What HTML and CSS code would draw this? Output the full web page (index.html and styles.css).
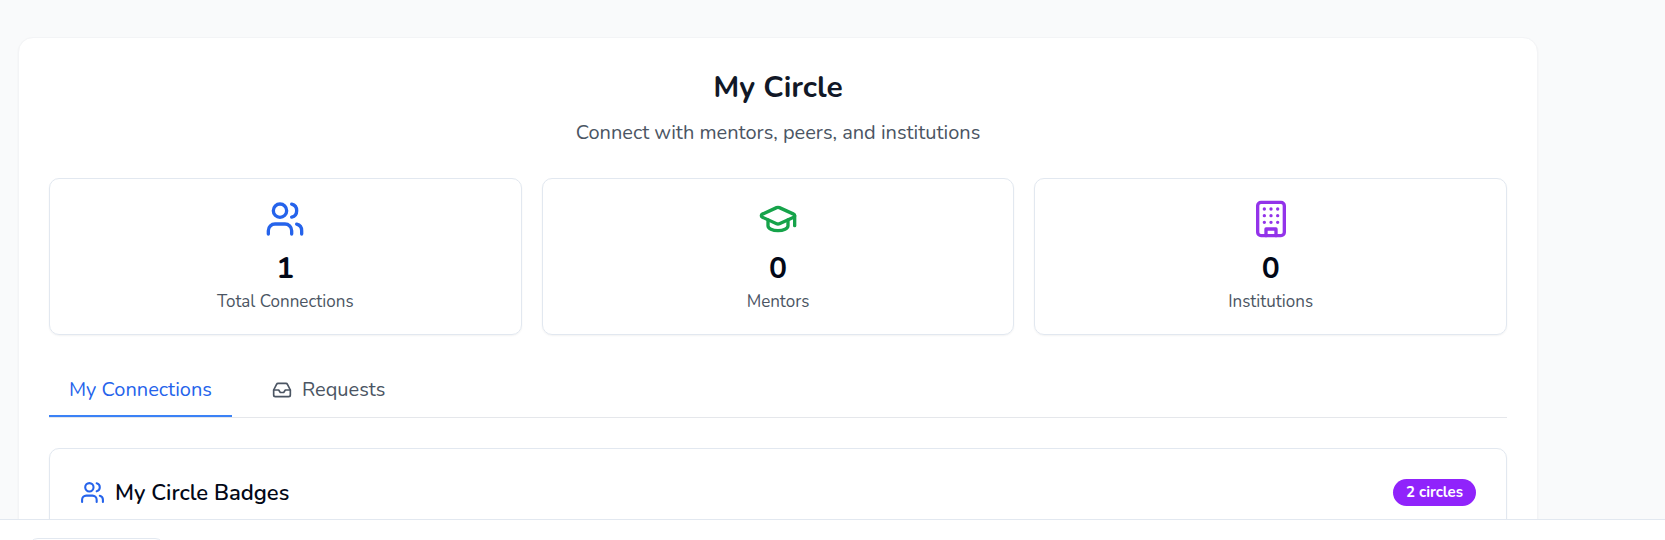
FILE: index.html
```html
<!DOCTYPE html>
<html lang="en">
<head>
<meta charset="utf-8">
<meta name="viewport" content="width=device-width, initial-scale=1">
<title>My Circle</title>
<link rel="stylesheet" href="styles.css">
</head>
<body>
<div class="page">
  <main class="content">
    <section class="panel">
      <header class="intro">
        <h1 class="intro-title">My Circle</h1>
        <p class="intro-text">Connect with mentors, peers, and institutions</p>
      </header>

      <div class="stats">
        <article class="stat">
          <svg class="icon icon-large blue" viewBox="0 0 24 24" aria-hidden="true"><path d="M16 21v-2a4 4 0 0 0-4-4H6a4 4 0 0 0-4 4v2"/><circle cx="9" cy="7" r="4"/><path d="M22 21v-2a4 4 0 0 0-3-3.87"/><path d="M16 3.13a4 4 0 0 1 0 7.75"/></svg>
          <div class="stat-value">1</div>
          <div class="stat-label">Total Connections</div>
        </article>
        <article class="stat">
          <svg class="icon icon-large green" viewBox="0 0 24 24" aria-hidden="true"><path d="M21.42 10.922a1 1 0 0 0-.019-1.838L12.83 5.18a2 2 0 0 0-1.66 0L2.6 9.08a1 1 0 0 0 0 1.832l8.57 3.908a2 2 0 0 0 1.66 0z"/><path d="M22 10v6"/><path d="M6 12.5V16a6 3 0 0 0 12 0v-3.5"/></svg>
          <div class="stat-value">0</div>
          <div class="stat-label">Mentors</div>
        </article>
        <article class="stat">
          <svg class="icon icon-large purple" viewBox="0 0 24 24" aria-hidden="true"><rect width="16" height="20" x="4" y="2" rx="2"/><path d="M9 22v-4h6v4"/><path d="M8 6h.01M16 6h.01M12 6h.01M12 10h.01M12 14h.01M16 10h.01M16 14h.01M8 10h.01M8 14h.01"/></svg>
          <div class="stat-value">0</div>
          <div class="stat-label">Institutions</div>
        </article>
      </div>

      <nav class="tabs">
        <button class="tab tab-active" type="button">My Connections</button>
        <button class="tab" type="button">
          <svg class="icon icon-small" viewBox="0 0 24 24" aria-hidden="true"><path d="M22 12h-6l-2 3h-4l-2-3H2"/><path d="M5.45 5.11 2 12v6a2 2 0 0 0 2 2h16a2 2 0 0 0 2-2v-6l-3.45-6.89A2 2 0 0 0 16.76 4H7.24a2 2 0 0 0-1.79 1.11z"/></svg>
          Requests
        </button>
      </nav>

      <section class="badges">
        <h2 class="badges-title">
          <svg class="icon icon-medium blue" viewBox="0 0 24 24" aria-hidden="true"><path d="M16 21v-2a4 4 0 0 0-4-4H6a4 4 0 0 0-4 4v2"/><circle cx="9" cy="7" r="4"/><path d="M22 21v-2a4 4 0 0 0-3-3.87"/><path d="M16 3.13a4 4 0 0 1 0 7.75"/></svg>
          My Circle Badges
        </h2>
        <span class="pill">2 circles</span>
      </section>
    </section>
  </main>
  <footer class="dock">
    <div class="dock-box"></div>
  </footer>
</div>
</body>
</html>
```

FILE: styles.css
```css
* { box-sizing: border-box; }

body {
  margin: 0;
  font-family: Nunito, Lato, sans-serif;
  font-size: 20px;
  line-height: 30px;
  color: #020817;
  background: #f9fafb;
}

.page {
  display: flex;
  flex-direction: column;
  height: 100vh;
}

.content {
  flex: 1;
  min-height: 0;
  overflow: hidden;
  padding: 37px 18px 0;
}

.panel {
  max-width: 1520px;
  padding: 30px;
  background: #fff;
  border: 1px solid #f3f4f6;
  border-radius: 15px;
  box-shadow: 0 1px 2px rgba(0, 0, 0, 0.05);
}

.intro {
  margin-bottom: 30px;
  text-align: center;
}

.intro-title {
  margin: 0 0 10px;
  font-size: 30px;
  line-height: 40px;
  font-weight: 700;
  color: #111827;
}

.intro-text {
  margin: 0;
  color: #4b5563;
}

.stats {
  display: grid;
  grid-template-columns: repeat(3, 1fr);
  gap: 20px;
  margin-bottom: 30px;
}

.stat {
  display: flex;
  flex-direction: column;
  align-items: center;
  padding: 20px;
  border: 1px solid #e2e8f0;
  border-radius: 10px;
  box-shadow: 0 1px 2px rgba(0, 0, 0, 0.05);
}

.stat-value {
  margin-top: 10px;
  font-size: 30px;
  line-height: 40px;
  font-weight: 700;
}

.stat-label {
  font-size: 17px;
  line-height: 25px;
  color: #4b5563;
}

.icon {
  flex: none;
  fill: none;
  stroke: currentColor;
  stroke-width: 2;
  stroke-linecap: round;
  stroke-linejoin: round;
}

.icon-large { width: 40px; height: 40px; }
.icon-medium { width: 25px; height: 25px; }
.icon-small { width: 20px; height: 20px; }

.blue { color: #2563eb; }
.green { color: #16a34a; }
.purple { color: #9333ea; }

.tabs {
  display: flex;
  gap: 20px;
  margin-bottom: 30px;
  border-bottom: 1px solid #e5e7eb;
}

.tab {
  display: flex;
  align-items: center;
  gap: 10px;
  padding: 10px 20px;
  border: 0;
  border-bottom: 2px solid transparent;
  background: none;
  font: inherit;
  color: #4b5563;
  cursor: pointer;
}

.tab-active {
  color: #2563eb;
  border-bottom-color: #3b82f6;
}

.badges {
  display: flex;
  align-items: center;
  justify-content: space-between;
  padding: 30px;
  border: 1px solid #e2e8f0;
  border-radius: 10px;
  box-shadow: 0 1px 2px rgba(0, 0, 0, 0.05);
}

.badges-title {
  display: flex;
  align-items: center;
  gap: 10px;
  margin: 0;
  font-size: 22px;
  line-height: 26px;
  font-weight: 600;
}

.pill {
  padding: 3px 13px;
  border-radius: 14px;
  background: #9023fb;
  color: #fff;
  font-size: 15px;
  line-height: 21px;
  font-weight: 700;
}

.dock {
  flex: none;
  height: 21px;
  overflow: hidden;
  padding: 18px 28px 0;
  background: #fff;
  border-top: 1px solid #e2e8f0;
}

.dock-box {
  width: 137px;
  height: 50px;
  border: 1px solid #e2e8f0;
  border-radius: 10px;
}
```
